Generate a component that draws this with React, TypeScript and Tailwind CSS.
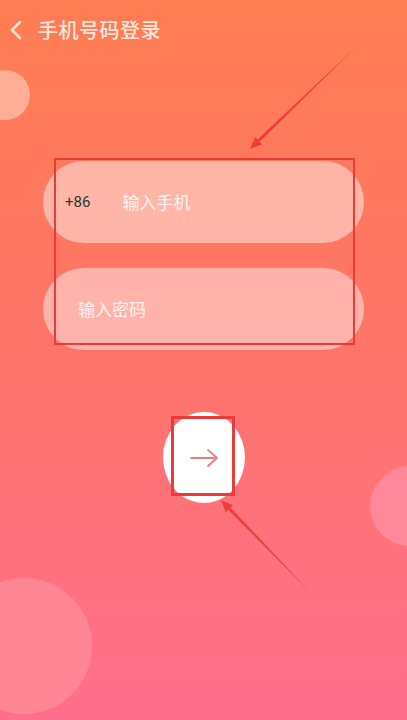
import { ChevronLeft } from 'lucide-react';

const font = { fontFamily: '"Noto Sans CJK SC", "Noto Sans", sans-serif' };

function Annotation({ x1, y1, x2, y2 }: { x1: number; y1: number; x2: number; y2: number }) {
    // tapered red arrow, head at (x2, y2)
    const dx = x2 - x1;
    const dy = y2 - y1;
    const len = Math.hypot(dx, dy);
    const ux = dx / len;
    const uy = dy / len;
    const nx = -uy;
    const ny = ux;
    const hx = x2 - ux * 12;
    const hy = y2 - uy * 12;
    const tail = `${x1},${y1}`;
    const shaft = `${tail} ${hx + nx * 1.6},${hy + ny * 1.6} ${hx - nx * 1.6},${hy - ny * 1.6}`;
    const head = `${x2},${y2} ${hx + nx * 5},${hy + ny * 5} ${hx - nx * 5},${hy - ny * 5}`;
    return (
        <>
            <polygon points={shaft} fill="#ee3b3b" />
            <polygon points={head} fill="#ee3b3b" />
        </>
    );
}

export default function App() {
    return (
        <div className="relative w-[407px] h-[720px] overflow-hidden bg-gradient-to-b from-[#ff7d52] via-[#ff746a] to-[#ff6f8e]" style={font}>
            {/* decorative bubbles */}
            <div className="absolute left-[-20px] top-[70px] w-[50px] h-[50px] rounded-full bg-[#ffae96]" />
            <div className="absolute left-[370px] top-[466px] w-[80px] h-[80px] rounded-full bg-[#ff889a]" />
            <div className="absolute left-[-44px] top-[578px] w-[136px] h-[136px] rounded-full bg-[#ff8694]" />

            <div className="relative flex flex-col">
                <div className="flex items-center h-[60px] pb-[1px]">
                    <ChevronLeft className="w-[32px] h-[32px] text-[#fde6dc]" strokeWidth={1.9} />
                    <span className="ml-[6px] text-[20px] font-medium tracking-[0.5px] text-[#fde6dc]">手机号码登录</span>
                </div>

                <div className="flex flex-col gap-[25px] mt-[101px] px-[43px]">
                    <div className="flex items-center h-[82px] rounded-full bg-white/45 pl-[22px]">
                        <span className="text-[15px] text-[#333]" style={{ fontFamily: '"Roboto", sans-serif' }}>+86</span>
                        <span className="ml-[32px] text-[17px] text-white/85">输入手机</span>
                    </div>
                    <div className="flex items-center h-[82px] rounded-full bg-white/45 pl-[35px]">
                        <span className="text-[17px] text-white/85">输入密码</span>
                    </div>
                </div>

                <div className="flex justify-center mt-[62px]">
                    <button className="flex items-center justify-center w-[82px] h-[91px] rounded-[50%] bg-white">
                        <svg width="30" height="20" viewBox="0 0 30 20" fill="none" stroke="#e8827f" strokeWidth="1.8" strokeLinecap="round" strokeLinejoin="round">
                            <path d="M2 10h26M19 2l9 8-9 8" />
                        </svg>
                    </button>
                </div>
            </div>

            {/* annotation overlay */}
            <div className="absolute left-[54px] top-[158px] w-[301px] h-[187px] border-2 border-[#ec3a3a]" />
            <div className="absolute left-[171px] top-[416px] w-[64px] h-[80px] border-[3px] border-[#ec3a3a]" />
            <svg className="absolute inset-0 pointer-events-none" width="407" height="720">
                <Annotation x1={356} y1={47} x2={250} y2={149} />
                <Annotation x1={309} y1={591} x2={221} y2={500} />
            </svg>
        </div>
    );
}
